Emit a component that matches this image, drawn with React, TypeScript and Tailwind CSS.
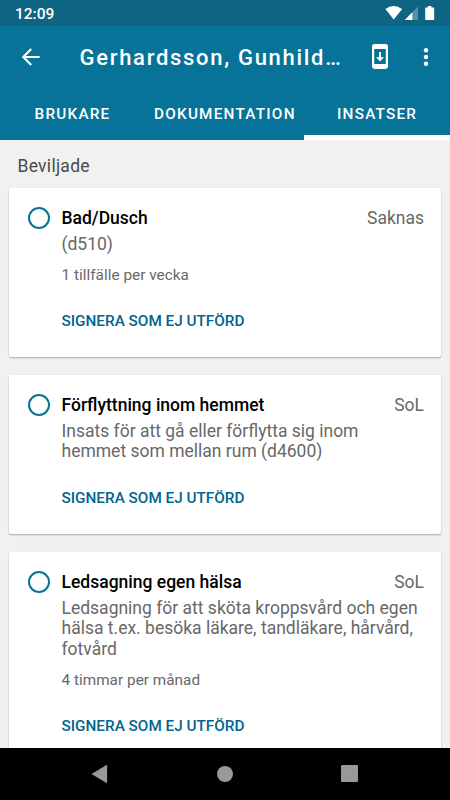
type Insats = {
  title: string;
  law: string;
  lines: string[];
  frequency?: string;
};

const insatser: Insats[] = [
  { title: "Bad/Dusch", law: "Saknas", lines: ["(d510)"], frequency: "1 tillfälle per vecka" },
  {
    title: "Förflyttning inom hemmet",
    law: "SoL",
    lines: ["Insats för att gå eller förflytta sig inom", "hemmet som mellan rum (d4600)"],
  },
  {
    title: "Ledsagning egen hälsa",
    law: "SoL",
    lines: ["Ledsagning för att sköta kroppsvård och egen", "hälsa t.ex. besöka läkare, tandläkare, hårvård,", "fotvård"],
    frequency: "4 timmar per månad",
  },
];

function StatusBar() {
  return (
    <div className="flex h-[26px] shrink-0 items-center justify-between bg-[#0e6583] pl-[15px] pr-[15px] text-white">
      <span className="text-[15.5px] font-medium leading-[26px] pt-[2px]">12:09</span>
      <svg viewBox="0 0 50 16" fill="currentColor" className="h-4 w-[50px]">
        <path d="M0.4 4 Q8.4 -2 17.2 4 L8.7 14.4Z" />
        <path d="M33 1.5V15H19.8Z" opacity="0.3" />
        <path d="M27.3 7.3V15H19.8Z" />
        <path d="M42.8 1h3.6v1.4h2q.8 0 .8.8v11q0 .8-.8.8h-7.4q-.8 0-.8-.8v-11q0-.8.8-.8h1.8Z" />
      </svg>
    </div>
  );
}

function AppBar() {
  return (
    <header className="h-[114px] shrink-0 bg-[#077398] text-white">
      <div className="flex h-[61px] items-center">
        <svg viewBox="0 0 24 24" fill="none" stroke="currentColor" strokeWidth="2" className="ml-[18px] h-[26px] w-[26px] shrink-0">
          <path d="M20 12H5M12.2 4.6L4.9 12l7.3 7.4" />
        </svg>
        <h1 className="ml-[35.5px] w-[270px] whitespace-nowrap pt-[3px] text-[22px] font-medium leading-[26px] tracking-[1.7px]">Gerhardsson, Gunhild…</h1>
        <svg viewBox="0 0 16 25" fill="none" className="ml-[22px] h-[25px] w-4 shrink-0">
          <rect width="16" height="25" rx="2.4" fill="currentColor" />
          <path d="M2.2 5H13.8V20H2.2Z" fill="#077398" />
          <path d="M7 8h2v5.2h3L8 17.4 4 13.2h3Z" fill="currentColor" />
        </svg>
        <svg viewBox="0 0 6 20" fill="currentColor" className="ml-[35px] h-5 w-1.5 shrink-0">
          <circle cx="3" cy="3.3" r="2.2" />
          <circle cx="3" cy="10" r="2.2" />
          <circle cx="3" cy="16.7" r="2.2" />
        </svg>
      </div>
      <nav className="flex h-[53px] text-[15.3px] font-medium leading-[55px] tracking-[1.23px]">
        <span className="w-[145px] pl-[34.5px]">BRUKARE</span>
        <span className="w-[159px] pl-[9px]">DOKUMENTATION</span>
        <span className="w-[146px] border-b-[5px] border-white pl-[33px]">INSATSER</span>
      </nav>
    </header>
  );
}

function InsatsCard({ insats }: { insats: Insats }) {
  return (
    <article className="mb-[18px] flex shrink-0 rounded-[2px] bg-white pb-[26px] pl-[19px] pr-[17px] pt-5 shadow-[0_1px_2px_rgba(0,0,0,0.3)]">
      <span className="-mt-px h-[22px] w-[22px] shrink-0 rounded-full border-[2.2px] border-[#077398]" />
      <div className="ml-[11.5px] flex-1 whitespace-nowrap">
        <div className="flex justify-between text-[17.5px] leading-[21px]">
          <h3 className="font-medium text-black">{insats.title}</h3>
          <span className="text-[#686868]">{insats.law}</span>
        </div>
        <div className="mt-[4.5px] text-[17.5px] leading-[20.5px] text-[#686868]">
          {insats.lines.map((line) => (
            <p key={line}>{line}</p>
          ))}
        </div>
        {insats.frequency && <p className="mt-[11px] text-[15.3px] leading-5 tracking-[0.03px] text-[#686868]">{insats.frequency}</p>}
        <button className={`${insats.frequency ? "mt-[26px]" : "mt-[26.5px]"} block text-[15.3px] font-medium leading-5 text-[#00658f]`}>
          SIGNERA SOM EJ UTFÖRD
        </button>
      </div>
    </article>
  );
}

function NavigationBar() {
  return (
    <div className="flex h-[52px] shrink-0 items-center bg-black pb-px pl-[91px] text-[#999]">
      <svg viewBox="0 0 17 20" fill="currentColor" className="h-5 w-[17px]">
        <path d="M.5 10 15.5 1q.6-.2.6.4v17.2q0 .6-.6.4Z" />
      </svg>
      <span className="ml-[109px] h-4 w-4 rounded-full bg-[#999]" />
      <span className="ml-[108px] h-[17px] w-[17px] rounded-[1px] bg-[#999]" />
    </div>
  );
}

export default function App() {
  return (
    <div className="flex h-[800px] w-[450px] flex-col overflow-hidden bg-[#f1f1f1] font-[Roboto,sans-serif]">
      <StatusBar />
      <AppBar />
      <main className="flex min-h-0 flex-1 flex-col overflow-hidden px-[9px]">
        <h2 className="h-12 shrink-0 pl-[8.5px] text-[17.5px] leading-[53px] tracking-[0.27px] text-[#4b4b4b]">Beviljade</h2>
        {insatser.map((insats) => (
          <InsatsCard key={insats.title} insats={insats} />
        ))}
      </main>
      <NavigationBar />
    </div>
  );
}
